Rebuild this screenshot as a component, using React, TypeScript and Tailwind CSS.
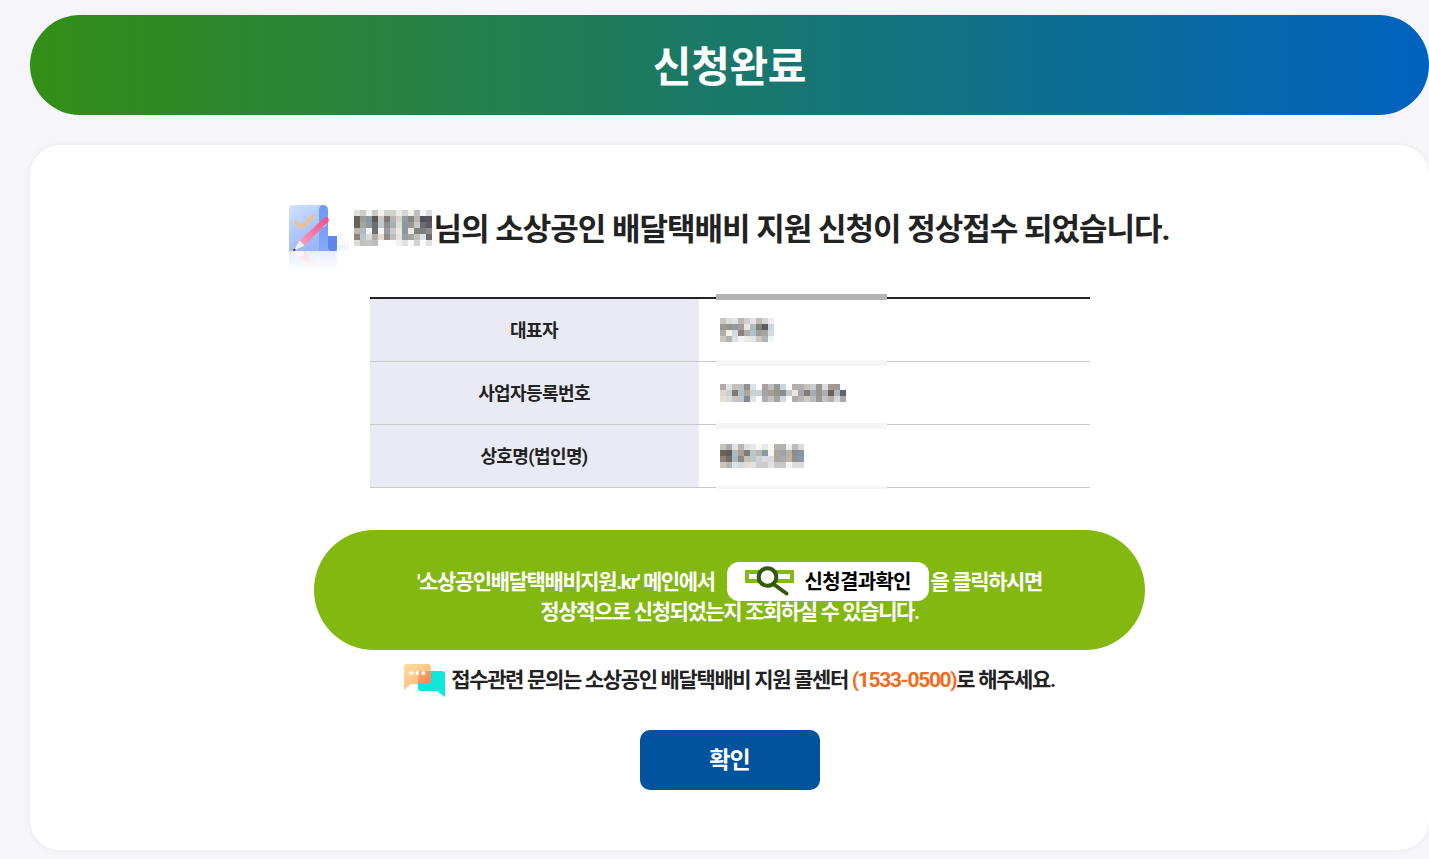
import React from "react";

const FONT = "font-['Roboto','Noto_Sans_CJK_KR','Noto_Sans_KR',sans-serif]";

function Mosaic({ rows, cell = 6 }: { rows: string[][]; cell?: number }) {
  return (
    <div className="flex flex-col">
      {rows.map((r, i) => (
        <div key={i} className="flex">
          {r.map((c, j) => (
            <div key={j} style={{ width: cell, height: cell, background: c }} />
          ))}
        </div>
      ))}
    </div>
  );
}

const nameMosaic = [
  ["#e3e0dc", "#cdcdcb", "#f4f3f1", "#c9c9c7", "#f3f1ec", "#d2d0cc", "#d2d0cc", "#ebebe9", "#d8d6d2", "#f3f1ef", "#bfbfbd", "#f6f6f6", "#dfdcdc"],
  ["#66635f", "#a09c94", "#8698a3", "#5c5a56", "#c9c9c7", "#7f7a73", "#b3b5b7", "#d9d2c6", "#8f9ca5", "#8a857d", "#b8b6b2", "#50505a", "#57525a"],
  ["#66635f", "#a8a49c", "#8a9ba6", "#6e6c68", "#bcc8d2", "#918c85", "#9fb0be", "#e6dccf", "#8a9aa5", "#9a958d", "#c9c7c3", "#6a6a72", "#605b62"],
  ["#bdb6ad", "#b3bbc0", "#f2f4f5", "#6f6f6f", "#f8f8f8", "#9a9a9a", "#c7ccd0", "#efe6db", "#8a99a3", "#eeeae6", "#808080", "#7d7d7d", "#8c8c8c"],
  ["#8f8474", "#b9c4cc", "#d9d9d7", "#b0aea9", "#e4ddd3", "#928b83", "#bcbcbc", "#e8e1d8", "#92a0aa", "#a7a29c", "#c0c0c0", "#e0e3e5", "#6d6a64"],
  ["#dcdbd8", "#c2c0bc", "#c4c4c2", "#bcbcba", "#fdfdfd", "#fdfdfd", "#fdfdfd", "#f5f1ee", "#e0e2e4", "#f9f9f9", "#d0d2d4", "#fcfcfc", "#dfdfdd"],
];
const m1 = [
  ["#c9c7c2", "#dbdbd9", "#e0e3e5", "#bcb7b3", "#d0cfce", "#e1e5e8", "#c1bab5", "#d5d6d6", "#ebedf1"],
  ["#9a9a98", "#9b9387", "#8e9aa3", "#a19d9b", "#eae5da", "#aebabd", "#837f7a", "#5c5c5c", "#c9d5df"],
  ["#b0aeac", "#f3efea", "#d3d9dc", "#8b837d", "#b0adaa", "#b2c0cf", "#a09d98", "#a8a5a2", "#d2dce4"],
  ["#c8c6c0", "#b2b2b0", "#dbe2e4", "#f1f3f4", "#efe9e4", "#e1e6e9", "#c9c6bf", "#b2b5b6", "#f0f4f7"],
];
const m2 = [
  ["#b3aaa2", "#d9e2ea", "#c9bfb7", "#bac2c4", "#8f8f8d", "#d8e3ea", "#fff", "#a7a2a0", "#bdbdba", "#9a9895", "#c9d4dc", "#fff", "#b4ada9", "#adb2b4", "#c9bfb5", "#c5ced6", "#9b9692", "#d7dde2", "#a69a90", "#989a9c", "#fff"],
  ["#e3d5c7", "#c7d2d8", "#817870", "#aec1ca", "#b2a69b", "#c9d0d2", "#c9d0d2", "#a5a5a8", "#a39f9b", "#979590", "#8b8b90", "#c4cacb", "#e9e4df", "#a2a8ab", "#857c73", "#9eacb3", "#98938d", "#aab0b5", "#66625e", "#b1b6ba", "#5f616b"],
  ["#eaded2", "#d3dbe3", "#cfc5be", "#bfc5ca", "#868a8d", "#dde4ea", "#fff", "#b0aeac", "#bfc3c5", "#aaa39b", "#d1d9e0", "#fff", "#b0aca8", "#b5bbbd", "#d2c9bd", "#b6bfc3", "#9d9893", "#bcc3cc", "#b6afa3", "#d2d8de", "#a9a9a6"],
];
const m3 = [
  ["#c6c3bf", "#acabaa", "#dfe3e6", "#b9b4ae", "#e0e0e0", "#e4e8ea", "#f9f5f0", "#e4e9ee", "#fbf9f6", "#b4b3b2", "#b4b3b2", "#eeeeee", "#b9bbbe", "#dadad9"],
  ["#6c6258", "#5c5c5a", "#a9b9c1", "#ad9f90", "#7c7c7b", "#b8c5cc", "#bdb5a9", "#8699a8", "#f5f4f2", "#aea69d", "#9ea4a8", "#b9afa3", "#8b8e90", "#8495a2"],
  ["#8d8378", "#6f6d6a", "#a9b4bb", "#8a8a88", "#c5bcb5", "#bcc7cc", "#ced3d5", "#dedcda", "#dcdad8", "#aea69e", "#a7abb0", "#c0b4a6", "#8f9193", "#8898a5"],
  ["#c9c5c0", "#b7b6b3", "#dde2e6", "#d4d8da", "#e2ddd8", "#dee2e5", "#cdcccb", "#cdcccb", "#e2e2e2", "#c9c8c7", "#c9c8c7", "#f2f3f4", "#dddddd", "#dddcda"],
];

function ChecklistIcon() {
  return (
    <div className="relative w-[58px] h-[66px] shrink-0">
      <svg width="49" height="46" viewBox="0 0 49 46" className="absolute left-0 top-0">
        <defs>
          <linearGradient id="pg" x1="0" y1="0" x2="0.5" y2="1">
            <stop offset="0" stopColor="#d2e2ff" />
            <stop offset="1" stopColor="#98b6f8" />
          </linearGradient>
          <linearGradient id="st" x1="0" y1="0" x2="0" y2="1">
            <stop offset="0" stopColor="#6e9af6" />
            <stop offset="1" stopColor="#86a8f6" />
          </linearGradient>
          <linearGradient id="pen" x1="0" y1="1" x2="1" y2="0">
            <stop offset="0" stopColor="#fa9fbd" />
            <stop offset="1" stopColor="#ee4f8c" />
          </linearGradient>
          <linearGradient id="rf" x1="0" y1="0" x2="0" y2="1">
            <stop offset="0" stopColor="#e6edfd" />
            <stop offset="1" stopColor="#ffffff" />
          </linearGradient>
          <linearGradient id="rp" x1="0" y1="0" x2="0" y2="1">
            <stop offset="0" stopColor="#fbd8e5" />
            <stop offset="1" stopColor="#ffffff" />
          </linearGradient>
        </defs>
        <path d="M4 0H34V46H0V4a4 4 0 0 1 4-4Z" fill="url(#pg)" />
        <path d="M30 4.500a4.500 4.500 0 0 1 9 0V31h9v15H30Z" fill="url(#st)" />
        <path d="M39 31h9v11a4 4 0 0 1-4 4h-1a4 4 0 0 1-4-4Z" fill="#5f87ea" />
        <path d="M6.500 17L13 22L24 11.500" fill="none" stroke="#eec281" strokeWidth="3.200" strokeLinecap="round" strokeLinejoin="round" />
        <path d="M24 28.500L37 19" stroke="#e6eeff" strokeWidth="2" />
        <path d="M10.500 35.500L35 13a2.800 2.800 0 0 1 3.800 4.300L15.500 40.500Z" fill="url(#pen)" />
        <path d="M10.500 35.500L15.500 40.500L5 45.500Z" fill="#fdf0ea" />
        <path d="M5 43.500L7 45L4 46Z" fill="#222" />
      </svg>
      <svg width="58" height="20" viewBox="0 0 58 20" className="absolute left-0 top-[46px]">
        <rect x="0" y="0" width="48" height="20" fill="url(#rf)" />
        <path d="M5 0L15 0L28 14L22 18Z" fill="url(#rp)" />
        <rect x="6" y="0" width="9" height="5" fill="#fdf5f5" />
      </svg>
      <div className="absolute left-[48px] top-[28px] w-[6px] h-[12px] bg-[#f4f6fd]" />
      <div className="absolute left-[48px] top-[40px] w-[12px] h-[6px] bg-[#f3f5fb]" />
      <div className="absolute left-[48px] top-[34px] w-[12px] h-[6px] bg-[#fafbfe]" />
    </div>
  );
}

function SearchIcon() {
  return (
    <svg width="49" height="30" viewBox="0 0 49 30" className="shrink-0">
      <rect x="2" y="6" width="13" height="9" fill="none" stroke="#84b814" strokeWidth="4" />
      <rect x="31" y="6" width="16" height="9" fill="none" stroke="#84b814" strokeWidth="4" />
      <circle cx="22.500" cy="11" r="8.800" fill="#fff" stroke="#35570f" strokeWidth="4" />
      <path d="M29 18.500L41.500 27.500" stroke="#35570f" strokeWidth="4" strokeLinecap="round" />
    </svg>
  );
}

function ChatIcon() {
  return (
    <svg width="42" height="33" viewBox="0 0 42 33" className="shrink-0">
      <defs>
        <linearGradient id="cb" x1="0" y1="0" x2="1" y2="1">
          <stop offset="0" stopColor="#fedd9a" />
          <stop offset="1" stopColor="#fdb271" />
        </linearGradient>
        <linearGradient id="cm" x1="0" y1="0" x2="1" y2="1">
          <stop offset="0" stopColor="#fda866" />
          <stop offset="1" stopColor="#fd8455" />
        </linearGradient>
      </defs>
      <path d="M17 7h21a3 3 0 0 1 3 3v23l-8-6H17a3 3 0 0 1-3-3V10a3 3 0 0 1 3-3Z" fill="#0ce8da" />
      <path d="M3 0h21a3 3 0 0 1 3 3v14a3 3 0 0 1-3 3H7l-7 6V3a3 3 0 0 1 3-3Z" fill="url(#cb)" />
      <path d="M17 7h10v10a3 3 0 0 1-3 3H14V10a3 3 0 0 1 3-3Z" fill="url(#cm)" />
      <circle cx="7.300" cy="9" r="2" fill="#fff" />
      <circle cx="13.300" cy="9" r="2" fill="#fff" />
      <circle cx="19.300" cy="9" r="2" fill="#fff" />
    </svg>
  );
}

function Row({ label, rows }: { label: string; rows: string[][] }) {
  return (
    <div className="flex h-[63px] border-b border-[#c8c8c8]">
      <div className="w-[329px] shrink-0 bg-[#e9eaf3] flex items-center justify-center text-[18px] font-bold text-[#222] tracking-[-0.6px]">
        {label}
      </div>
      <div className="flex-1 flex items-center pl-[21px]">
        <Mosaic rows={rows} />
      </div>
    </div>
  );
}

export default function App() {
  return (
    <div className={`${FONT} min-h-[859px] bg-[#f5f5fa] pt-[15px] pl-[30px] overflow-hidden`}>
      <div className="h-[100px] pt-[4px] rounded-[50px] bg-linear-to-r/srgb from-[#338e15] to-[#0062bf] flex items-center justify-center text-white text-[42px] font-bold tracking-[-0.3px]">
        신청완료
      </div>

      <div className="mt-[30px] h-[705px] bg-white rounded-[30px] shadow-[0_0_6px_rgba(0,0,0,0.06)] flex flex-col items-center pt-[60px]">
        <div className="flex items-start h-[92px] text-[#222]">
          <div className="mr-[7px]">
            <ChecklistIcon />
          </div>
          <div className="flex items-center h-[46px]">
            <Mosaic rows={nameMosaic} />
            <span className="ml-[1px] pt-[4px] text-[31px] font-bold tracking-[-1px] whitespace-nowrap">
              님의 소상공인 배달택배비 지원 신청이 정상접수 되었습니다.
            </span>
          </div>
        </div>

        <div className="relative w-[720px] border-t-2 border-[#222]">
          <Row label="대표자" rows={m1} />
          <Row label="사업자등록번호" rows={m2} />
          <Row label="상호명(법인명)" rows={m3} />
          <div className="absolute left-[346px] top-[-5px] w-[171px] h-[6px] bg-[#b3b3b3]" />
          <div className="absolute left-[346px] top-[61px] w-[171px] h-[6px] bg-[#f5f5f5]" />
          <div className="absolute left-[346px] top-[124px] w-[171px] h-[6px] bg-[#f5f5f5]" />
          <div className="absolute left-[346px] top-[187px] w-[171px] h-[3px] bg-[#f5f5f5]" />
        </div>

        <div className="mt-[42px] w-[831px] h-[120px] pt-[12px] rounded-[60px] bg-[#83b811] flex flex-col items-center justify-center text-white text-[21px] font-bold tracking-[-1.400px] leading-[30px]">
          <div className="flex items-center h-[30px]">
            <span className="pt-[2px] whitespace-nowrap">'소상공인배달택배비지원.kr' 메인에서</span>
            <span className="ml-[12px] mr-[2px] w-[202px] h-[39px] rounded-[12px] bg-white flex items-center pl-[18px] text-black text-[20px] tracking-[-0.7px]">
              <SearchIcon />
              <span className="ml-[11px] pt-[2px] whitespace-nowrap">신청결과확인</span>
            </span>
            <span className="pt-[2px] whitespace-nowrap">을 클릭하시면</span>
          </div>
          <div className="h-[30px] pt-[1px] whitespace-nowrap">정상적으로 신청되었는지 조회하실 수 있습니다.</div>
        </div>

        <div className="mt-[14px] flex items-start text-[21px] font-bold text-[#222] tracking-[-1.350px] leading-[30px]">
          <ChatIcon />
          <span className="ml-[5px] mt-[1px] whitespace-nowrap">
            접수관련 문의는 소상공인 배달택배비 지원 콜센터 <span className="text-[#f26a1b]">(1533-0500)</span>로 해주세요.
          </span>
        </div>

        <button className="mt-[33px] w-[180px] h-[60px] pt-[3px] rounded-[10px] bg-[#01539d] text-white text-[23px] font-bold tracking-[-1px]">
          확인
        </button>
      </div>
    </div>
  );
}
